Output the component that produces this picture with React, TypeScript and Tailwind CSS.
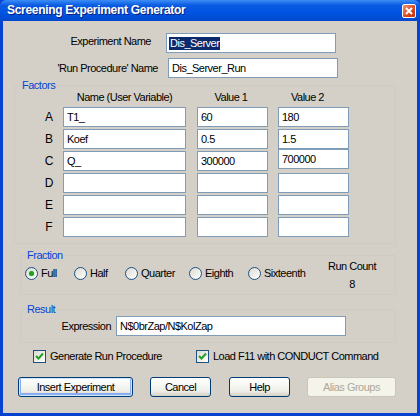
import React from 'react'

const font = "font-['Liberation_Sans',Arial,sans-serif] text-[11px] tracking-[-0.5px] leading-[13px]"

function TextBox({ value, width, selected, className = '' }: { value?: string; width: string; selected?: boolean; className?: string }) {
  return (
    <div className={`${width} h-[20px] shrink-0 border border-[#7f9db9] bg-white pl-[3px] flex items-center text-black ${className}`}>
      {selected ? <span className="bg-[#0b2a6e] text-white px-[1px] -ml-[1px]">{value}</span> : value}
    </div>
  )
}

function Radio({ label, checked, width }: { label: string; checked?: boolean; width: string }) {
  return (
    <div className={`${width} flex items-center gap-[3px]`}>
      <span className="w-[13px] h-[13px] rounded-full border border-[#1c5180] bg-[linear-gradient(135deg,#dcdad0,#ffffff)] flex items-center justify-center">
        {checked && <span className="w-[5px] h-[5px] rounded-full bg-[#21a121] shadow-[0_0_1px_#6fd46f]" />}
      </span>
      <span>{label}</span>
    </div>
  )
}

function Check({ label, className = '' }: { label: string; className?: string }) {
  return (
    <div className={`flex items-center gap-[4px] ${className}`}>
      <span className="w-[13px] h-[13px] border border-[#1c5180] bg-[linear-gradient(135deg,#dcdad0,#ffffff)] flex items-center justify-center">
        <svg width="9" height="9" viewBox="0 0 9 9">
          <path d="M1 4 L3.5 6.5 L8 1.5" fill="none" stroke="#21a121" strokeWidth="2" />
        </svg>
      </span>
      <span>{label}</span>
    </div>
  )
}

function Button({ label, width, primary, disabled }: { label: string; width: string; primary?: boolean; disabled?: boolean }) {
  if (disabled) {
    return (
      <div className={`${width} h-[20px] rounded-[3px] border border-[#c9c7ba] bg-[#f5f4ea] text-[#aca899] flex items-center justify-center`}>
        {label}
      </div>
    )
  }
  return (
    <div
      className={`${width} h-[20px] rounded-[3px] border border-[#003c74] bg-[linear-gradient(to_bottom,#ffffff,#f0f0ea_70%,#d6d0c5)] text-black flex items-center justify-center ${
        primary ? 'shadow-[inset_0_0_0_1px_#cee7ff,inset_0_-1px_0_2px_#89adf0]' : ''
      }`}
    >
      {label}
    </div>
  )
}

const rows = [
  { k: 'A', name: 'T1_', v1: '60', v2: '180' },
  { k: 'B', name: 'Koef', v1: '0.5', v2: '1.5' },
  { k: 'C', name: 'Q_', v1: '300000', v2: '700000' },
  { k: 'D', name: '', v1: '', v2: '' },
  { k: 'E', name: '', v1: '', v2: '' },
  { k: 'F', name: '', v1: '', v2: '' },
]

export default function App() {
  return (
    <div className={`w-[420px] h-[416px] flex flex-col bg-[#0842d0] ${font}`}>
      {/* title bar */}
      <div className="h-[21px] shrink-0 flex items-center justify-between pl-[7px] pr-[4px] rounded-t-[6px] bg-[linear-gradient(to_bottom,#3c8df5,#0a5be2_25%,#0054e3_60%,#0048cc)]">
        <span className="text-white font-bold text-[12px] tracking-[-0.3px] [text-shadow:1px_1px_0_#0a1f7a]">
          Screening Experiment Generator
        </span>
        <span className="w-[14px] h-[14px] rounded-[2px] border border-white bg-[linear-gradient(135deg,#f09476,#d8461c_60%,#c2350e)] flex items-center justify-center">
          <svg width="8" height="8" viewBox="0 0 8 8">
            <path d="M1 1 L7 7 M7 1 L1 7" stroke="white" strokeWidth="2" />
          </svg>
        </span>
      </div>

      {/* client area */}
      <div className="flex-1 mx-[3px] mb-[3px] bg-[#d4d0c8] text-black flex flex-col pt-[12px]">
        <div className="flex items-center">
          <div className="w-[148px] text-right -mt-[3px]">Experiment Name</div>
          <TextBox value="Dis_Server" width="w-[170px] ml-[15px]" selected />
        </div>
        <div className="flex items-center mt-[5px]">
          <div className="w-[155px] text-right">'Run Procedure' Name</div>
          <TextBox value="Dis_Server_Run" width="w-[170px] ml-[10px]" />
        </div>

        <fieldset className="ml-[11px] w-[382px] mt-[1px] border border-[#cfcbc3] pb-[6px]">
          <legend className="ml-[6px] px-[1px] text-[#0046d5] leading-[12px]">Factors</legend>
          <div className="flex pl-[25px]">
            <div className="w-[18px]" />
            <div className="w-[123px] ml-[5px] text-center">Name (User Variable)</div>
            <div className="w-[71px] ml-[11px] text-center pr-[3px]">Value 1</div>
            <div className="w-[71px] ml-[10px] text-center pr-[12px]">Value 2</div>
          </div>
          <div className="flex flex-col gap-[2px] mt-[3px]">
            {rows.map((r) => (
              <div key={r.k} className="flex items-start pl-[25px]">
                <div className="w-[18px] h-[20px] flex items-center justify-center text-[12px] tracking-normal">{r.k}</div>
                <TextBox value={r.name} width="w-[123px] ml-[5px]" />
                <TextBox value={r.v1} width="w-[71px] ml-[11px]" />
                <TextBox value={r.v2} width="w-[71px] ml-[10px]" className={r.k === 'C' ? '-mt-[2px]' : ''} />
              </div>
            ))}
          </div>
        </fieldset>

        <fieldset className="ml-[17px] w-[376px] mt-[5px] border border-[#cfcbc3] pb-[3px]">
          <legend className="ml-[5px] px-[1px] text-[#0046d5] leading-[12px]">Fraction</legend>
          <div className="flex items-start">
            <div className="flex items-center pl-[4px] mt-[6px]">
              <Radio label="Full" checked width="w-[49px]" />
              <Radio label="Half" width="w-[51px]" />
              <Radio label="Quarter" width="w-[64px]" />
              <Radio label="Eighth" width="w-[59px]" />
              <Radio label="Sixteenth" width="w-[70px]" />
            </div>
            <div className="ml-auto mr-[12px] w-[62px] -mt-[1px] flex flex-col items-center">
              <span>Run Count</span>
              <span className="mt-[5px]">8</span>
            </div>
          </div>
        </fieldset>

        <fieldset className="ml-[17px] w-[376px] mt-[8px] border border-[#cfcbc3] pb-[6px]">
          <legend className="ml-[5px] px-[1px] text-[#0046d5] leading-[12px]">Result</legend>
          <div className="flex items-center mt-[1px]">
            <div className="w-[90px] text-right">Expression</div>
            <TextBox value="N$0brZap/N$KolZap" width="w-[230px] ml-[5px]" />
          </div>
        </fieldset>

        <div className="flex items-center pl-[30px] mt-[7px]">
          <Check label="Generate Run Procedure" className="w-[163px]" />
          <Check label="Load F11 with CONDUCT Command" />
        </div>

        <div className="flex items-center pl-[15px] mt-[14px]">
          <Button label="Insert Experiment" width="w-[115px]" primary />
          <div className="ml-[17px]">
            <Button label="Cancel" width="w-[61px]" />
          </div>
          <div className="ml-[18px]">
            <Button label="Help" width="w-[61px]" />
          </div>
          <div className="ml-[17px]">
            <Button label="Alias Groups" width="w-[89px]" disabled />
          </div>
        </div>
      </div>
    </div>
  )
}
